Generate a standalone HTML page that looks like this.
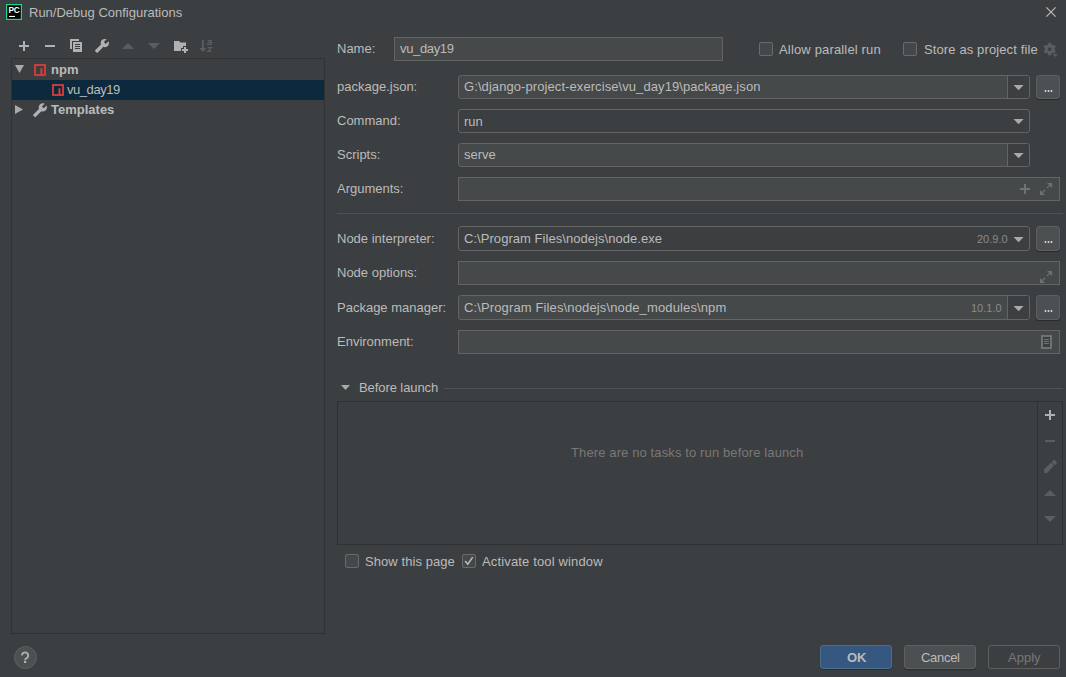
<!DOCTYPE html>
<html><head><meta charset="utf-8">
<style>
*{margin:0;padding:0;box-sizing:border-box}
html,body{width:1066px;height:677px;overflow:hidden;background:#3c3f41}
body{position:relative;font-family:"Liberation Sans",sans-serif;font-size:13px;color:#bbbbbb}
.a{position:absolute}
.t{position:absolute;line-height:15px;white-space:nowrap}
.fld{position:absolute;background:#45494a;border:1px solid #646464}
.cmb{position:absolute;background:#3c3f41;border:1px solid #646464;border-radius:3px}
.cmbe{position:absolute;background:#45494a;border:1px solid #646464;border-radius:3px;overflow:hidden}
.cmbe .btn{position:absolute;right:0;top:0;bottom:0;width:22px;background:#3c3f41;border-left:1px solid #646464}
.arr{position:absolute;width:0;height:0;border-left:4.5px solid transparent;border-right:4.5px solid transparent;border-top:5px solid #a9a9a9}
.dots{position:absolute;background:#4c5052;border:1px solid #5e6060;border-radius:3px;box-shadow:0 1px 1px rgba(0,0,0,.35)}
.cb{position:absolute;width:14px;height:14px;background:#43494a;border:1px solid #6b6b6b;border-radius:2px}
.btnb{position:absolute;height:24px;border-radius:3px;border:1px solid #5e6060;background:#4c5052;box-shadow:0 1px 1px rgba(0,0,0,.3)}
</style></head>
<body>
<!-- title -->
<svg class="a" style="left:6px;top:4px" width="16" height="16" viewBox="0 0 16 16">
<rect x="0.6" y="0.6" width="14.8" height="14.8" fill="#000" stroke="#21d789" stroke-width="1.2"/>
<text x="2.6" y="8.95" font-family="Liberation Sans" font-weight="bold" font-size="8.3" letter-spacing="-0.5" fill="#fff">PC</text>
<rect x="3.1" y="11.9" width="5.9" height="1.1" fill="#fff"/>
</svg>
<div class="t" style="left:29px;top:5px">Run/Debug Configurations</div>
<svg class="a" style="left:1044px;top:5px" width="14" height="14" viewBox="1044 5 14 14"><path d="M1046.4 7.4L1055.6 16.6M1055.6 7.4L1046.4 16.6" stroke="#bdbdbd" stroke-width="1.15"/></svg>

<!-- toolbar -->
<svg class="a" style="left:0;top:30px" width="230" height="28" viewBox="0 30 230 28">
<path d="M19 45h10v2h-10zM23 41h2v10h-2z" fill="#afb1b3"/>
<path d="M45 45h10v2h-10z" fill="#afb1b3"/>
<path d="M70 39h9v2h-7v8h-2z" fill="#afb1b3"/>
<path d="M73 42h9v10h-9z" fill="#afb1b3"/>
<path d="M75 44h5v1h-5zM75 46h5v1h-5zM75 48h5v1h-5z" fill="#3c3f41"/>
<path transform="translate(109.6,38.2) scale(-0.636,0.636)" d="M22.7 19l-9.1-9.1c.9-2.3.4-5-1.5-6.9-2-2-5-2.4-7.4-1.3L9 6 6 9 1.6 4.7C.4 7.1.9 10.1 2.9 12.1c1.9 1.9 4.6 2.4 6.9 1.5l9.1 9.1c.4.4 1 .4 1.4 0l2.3-2.3c.5-.4.5-1.1.1-1.4z" fill="#afb1b3"/>
<path d="M122 49L128 43L134 49z" fill="#5b5e60"/>
<path d="M148 43L160 43L154 49z" fill="#5b5e60"/>
<path d="M174 41H179L180.5 42.5H186V46H183V48H181V51H174Z" fill="#afb1b3"/>
<path d="M184 47h2v6h-2zM182 49h6v2h-6z" fill="#afb1b3"/>
<path d="M202.9 40v9" stroke="#5b5e60" stroke-width="1.8"/>
<path d="M199.2 48L206.6 48L202.9 52z" fill="#5b5e60"/>
<path d="M207.6 40.6H210.6Q211.4 40.6 211.4 41.4V45M211.2 42.7H208.6Q207.6 42.7 207.6 43.6Q207.6 44.5 208.6 44.5H211.2M207.6 47.6H211.4L207.6 51.4H211.6" fill="none" stroke="#5b5e60" stroke-width="1.2"/>
</svg>

<!-- tree -->
<div class="a" style="left:11px;top:58px;width:314px;height:576px;border:1px solid #313233;background:#3c3f41"></div>
<div class="a" style="left:12px;top:80px;width:312px;height:20px;background:#0d293e"></div>
<svg class="a" style="left:0;top:58px" width="200" height="70" viewBox="0 58 200 70">
<path d="M15 65h9l-4.5 8z" fill="#a9a9a9"/>
<rect x="35" y="65" width="10" height="10" fill="none" stroke="#db3f3d" stroke-width="1.75"/>
<rect x="40.5" y="68.3" width="1.9" height="6.7" fill="#db3f3d"/>
<rect x="53" y="85" width="10" height="10" fill="none" stroke="#db3f3d" stroke-width="1.75"/>
<rect x="58.5" y="88.3" width="1.9" height="6.7" fill="#db3f3d"/>
<path d="M15 105l8 4.5l-8 4.5z" fill="#a9a9a9"/>
<path transform="translate(47.6,102.6) scale(-0.636,0.636)" d="M22.7 19l-9.1-9.1c.9-2.3.4-5-1.5-6.9-2-2-5-2.4-7.4-1.3L9 6 6 9 1.6 4.7C.4 7.1.9 10.1 2.9 12.1c1.9 1.9 4.6 2.4 6.9 1.5l9.1 9.1c.4.4 1 .4 1.4 0l2.3-2.3c.5-.4.5-1.1.1-1.4z" fill="#afb1b3"/>
</svg>
<div class="t" style="left:51px;top:62px;font-weight:bold">npm</div>
<div class="t" style="left:67px;top:82px;letter-spacing:-0.45px">vu_day19</div>
<div class="t" style="left:51px;top:102px;font-weight:bold">Templates</div>

<!-- form labels -->
<div class="t" style="left:337px;top:41px">Name:</div>
<div class="t" style="left:337px;top:79px">package.json:</div>
<div class="t" style="left:337px;top:113px">Command:</div>
<div class="t" style="left:337px;top:147px">Scripts:</div>
<div class="t" style="left:337px;top:181px">Arguments:</div>
<div class="t" style="left:337px;top:231px">Node interpreter:</div>
<div class="t" style="left:337px;top:265px">Node options:</div>
<div class="t" style="left:337px;top:300px">Package manager:</div>
<div class="t" style="left:337px;top:334px">Environment:</div>

<!-- name -->
<div class="fld" style="left:394px;top:37px;width:329px;height:24px"></div>
<div class="t" style="left:400px;top:41px;letter-spacing:-0.35px">vu_day19</div>
<div class="cb" style="left:759px;top:42px"></div>
<div class="t" style="left:779px;top:42px;letter-spacing:0.16px">Allow parallel run</div>
<div class="cb" style="left:903px;top:42px"></div>
<div class="t" style="left:924px;top:42px;letter-spacing:0.12px">Store as project file</div>


<!-- package.json -->
<div class="cmbe" style="left:458px;top:75px;width:572px;height:24px"><div class="btn"></div></div>
<svg class="a" style="left:1013px;top:84px" width="12" height="8" viewBox="0 0 12 8"><path d="M0.6 1h10l-5 5.3z" fill="#a9a9a9"/></svg>
<div class="t" style="left:464px;top:79px;letter-spacing:0.08px">G:\django-project-exercise\vu_day19\package.json</div>
<div class="dots" style="left:1036px;top:75px;width:24px;height:24px"></div>
<svg class="a" style="left:1040px;top:88px" width="16" height="6" viewBox="1040 88 16 6"><path d="M1044.7 90h1.6v2h-1.6zM1047.7 90h1.6v2h-1.6zM1050.7 90h1.6v2h-1.6z" fill="#d0d0d0"/></svg>

<!-- command -->
<div class="cmb" style="left:458px;top:109px;width:572px;height:24px"></div>
<svg class="a" style="left:1013px;top:118px" width="12" height="8" viewBox="0 0 12 8"><path d="M0.6 1h10l-5 5.3z" fill="#a9a9a9"/></svg>
<div class="t" style="left:464px;top:114px">run</div>

<!-- scripts -->
<div class="cmbe" style="left:458px;top:143px;width:572px;height:24px"><div class="btn"></div></div>
<svg class="a" style="left:1013px;top:152px" width="12" height="8" viewBox="0 0 12 8"><path d="M0.6 1h10l-5 5.3z" fill="#a9a9a9"/></svg>
<div class="t" style="left:464px;top:147px">serve</div>

<!-- arguments -->
<div class="fld" style="left:458px;top:177px;width:602px;height:24px"></div>
<svg class="a" style="left:1018px;top:182px" width="36" height="14" viewBox="1018 182 36 14">
<path d="M1020 188h10v2h-10zM1024 184h2v10h-2z" fill="#6b7375"/>
</svg>

<div class="a" style="left:337px;top:213px;width:726px;height:1px;background:#4f5152"></div>

<!-- node interpreter -->
<div class="cmb" style="left:458px;top:226px;width:572px;height:25px"></div>
<svg class="a" style="left:1013px;top:236px" width="12" height="8" viewBox="0 0 12 8"><path d="M0.6 1h10l-5 5.3z" fill="#a9a9a9"/></svg>
<div class="t" style="left:464px;top:231px;letter-spacing:0.05px">C:\Program Files\nodejs\node.exe</div>
<div class="t" style="left:977px;top:233px;font-size:11px;line-height:12px;color:#8a8a8a">20.9.0</div>
<div class="dots" style="left:1036px;top:226px;width:24px;height:25px"></div>
<svg class="a" style="left:1040px;top:240px" width="16" height="6" viewBox="1040 240 16 6"><path d="M1044.7 241h1.6v2h-1.6zM1047.7 241h1.6v2h-1.6zM1050.7 241h1.6v2h-1.6z" fill="#d0d0d0"/></svg>

<!-- node options -->
<div class="fld" style="left:458px;top:261px;width:602px;height:24px"></div>

<!-- package manager -->
<div class="cmbe" style="left:458px;top:295px;width:572px;height:25px"><div class="btn"></div></div>
<svg class="a" style="left:1013px;top:305px" width="12" height="8" viewBox="0 0 12 8"><path d="M0.6 1h10l-5 5.3z" fill="#a9a9a9"/></svg>
<div class="t" style="left:464px;top:300px;letter-spacing:0.13px">C:\Program Files\nodejs\node_modules\npm</div>
<div class="t" style="left:971px;top:302px;font-size:11px;line-height:12px;color:#8a8a8a">10.1.0</div>
<div class="dots" style="left:1036px;top:295px;width:24px;height:25px"></div>
<svg class="a" style="left:1040px;top:309px" width="16" height="6" viewBox="1040 309 16 6"><path d="M1044.7 310h1.6v2h-1.6zM1047.7 310h1.6v2h-1.6zM1050.7 310h1.6v2h-1.6z" fill="#d0d0d0"/></svg>

<!-- environment -->
<div class="fld" style="left:458px;top:330px;width:602px;height:24px"></div>

<!-- before launch -->
<svg class="a" style="left:340px;top:384px" width="11" height="7" viewBox="340 384 11 7"><path d="M341 385h9l-4.5 5z" fill="#a9a9a9"/></svg>
<div class="t" style="left:359px;top:380px;letter-spacing:-0.08px">Before launch</div>
<div class="a" style="left:444px;top:388px;width:619px;height:1px;background:#4f5152"></div>
<div class="a" style="left:337px;top:401px;width:726px;height:144px;border:1px solid #2f3133"></div>
<div class="a" style="left:1037px;top:402px;width:1px;height:142px;background:#2f3133"></div>
<div class="t" style="left:571px;top:445px;color:#787878;letter-spacing:0.12px">There are no tasks to run before launch</div>

<!-- checkboxes -->
<div class="cb" style="left:345px;top:554px"></div>
<div class="t" style="left:365px;top:554px;letter-spacing:0.07px">Show this page</div>
<div class="cb" style="left:462px;top:554px"></div>
<div class="t" style="left:482px;top:554px;letter-spacing:0.15px">Activate tool window</div>

<!-- buttons -->
<div class="a" style="left:14px;top:646px;width:23px;height:23px;border-radius:50%;background:#4c5052;border:1px solid #5e6060"></div>
<svg class="a" style="left:14px;top:646px" width="23" height="23" viewBox="14 646 23 23"><path d="M21.9 655.4A3.15 3.15 0 1 1 27.4 657.6Q25.1 658.6 25.1 660.2" fill="none" stroke="#afb1b3" stroke-width="1.9"/><rect x="24" y="661" width="2.2" height="2" fill="#afb1b3"/></svg>
<div class="btnb" style="left:820px;top:645px;width:72px;background:#365880;border-color:#4c708c"></div>
<div class="t" style="left:847px;top:650px;font-weight:bold">OK</div>
<div class="btnb" style="left:904px;top:645px;width:72px"></div>
<div class="t" style="left:921px;top:650px;letter-spacing:-0.3px">Cancel</div>
<div class="btnb" style="left:988px;top:645px;width:72px;background:#3c3f41;box-shadow:none"></div>
<div class="t" style="left:1008px;top:650px;color:#777777">Apply</div>

<!-- icons: expand, env doc, gear, checkmark, launch toolbar -->
<svg class="a" style="left:0;top:0" width="1066" height="677" viewBox="0 0 1066 677">
<g fill="#6b7375">
<path d="M1047 183h5v5z"/><path d="M1040 195v-5l5 5z"/>
<path d="M1049.5 185.5L1046.8 188.2M1042.5 192.5L1045.2 189.8" stroke="#6b7375" stroke-width="1.1"/>
<path d="M1047 271h5v5z"/><path d="M1040 283v-5l5 5z"/>
<path d="M1049.5 273.5L1046.8 276.2M1042.5 280.5L1045.2 277.8" stroke="#6b7375" stroke-width="1.1"/>
<rect x="1043" y="337" width="7" height="10" fill="#3c3f41"/><path d="M1041 335h11v14h-11zM1043 337v10h7v-10z" fill-rule="evenodd"/>
<path d="M1044 339h5v1h-5zM1044 341h5v1h-5zM1044 343h5v1h-5z"/>
</g>
<!-- gear -->
<path fill-rule="evenodd" fill="#5b5e60" d="M1048.75 42.78 L1050.75 42.78 L1052.00 45.20 L1054.72 45.07 L1055.72 46.81 L1054.25 49.10 L1055.72 51.39 L1054.72 53.13 L1052.00 53.00 L1050.75 55.42 L1048.75 55.42 L1047.50 53.00 L1044.78 53.13 L1043.78 51.39 L1045.25 49.10 L1043.78 46.81 L1044.78 45.07 L1047.50 45.20ZM1051.65 49.10A1.9 1.9 0 1 0 1047.85 49.10A1.9 1.9 0 1 0 1051.65 49.10Z"/>
<path d="M1052.8 54h5l-2.5 3z" fill="#5b5e60"/>
<!-- checkmark -->
<path d="M465.1 560.9L467.8 564.1L472.7 557.1" fill="none" stroke="#b8b8b8" stroke-width="1.6"/>
<!-- launch toolbar -->
<path d="M1045 414h10v2h-10zM1049 410h2v10h-2z" fill="#afb1b3"/>
<path d="M1045 440h10v2h-10z" fill="#5b5e60"/>
<path d="M1044 473L1044 469.5L1051.1 462.6L1054.1 465.6L1047.1 473Z" fill="#5b5e60"/><path transform="translate(-0.7,0.9)" d="M1052.3 461.1L1054.1 459.3Q1054.9 458.5 1055.7 459.3L1057.3 460.9Q1058.1 461.7 1057.3 462.5L1055.5 464.3Z" fill="#5b5e60"/>
<path d="M1044 496L1050 490L1056 496z" fill="#5b5e60"/>
<path d="M1044 516L1056 516L1050 522z" fill="#5b5e60"/>
</svg>
</body></html>
